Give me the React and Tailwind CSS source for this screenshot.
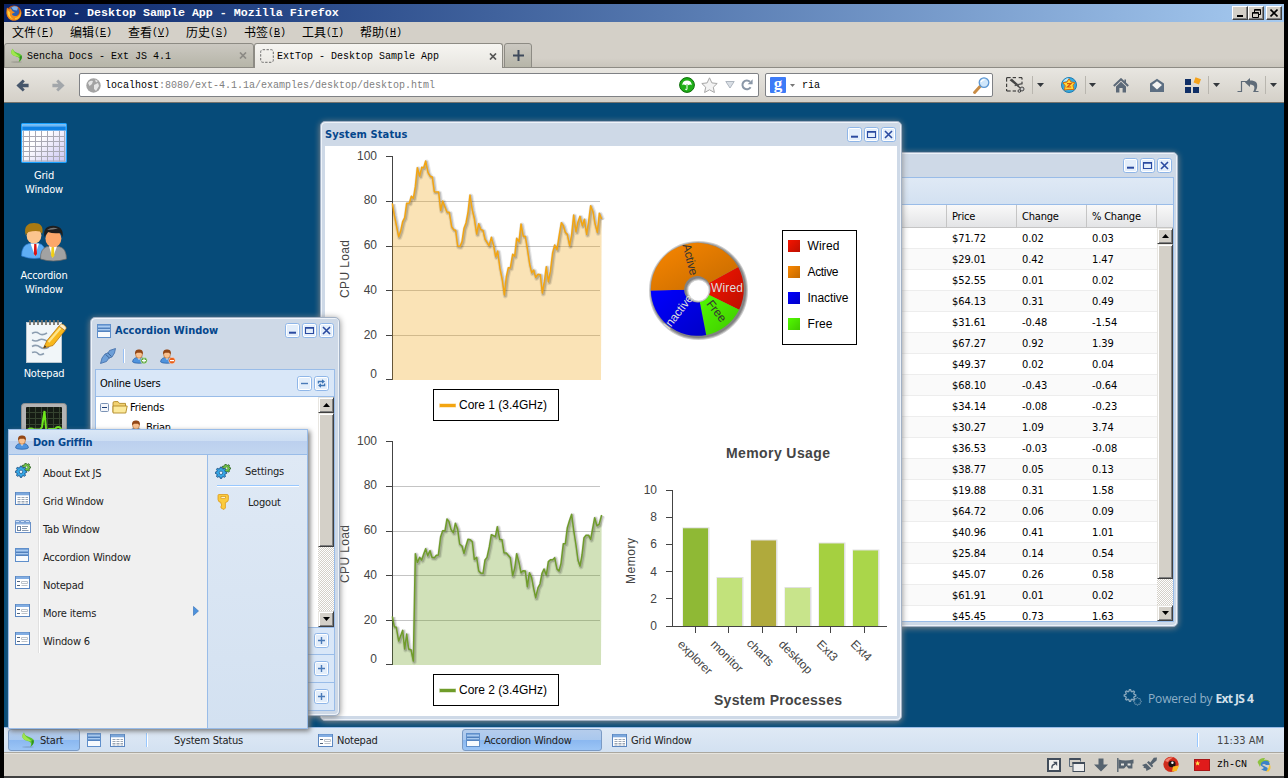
import React from "react";

/* ---------- small glyphs ---------- */
const Svg = ({ w, h, vb, className = "", children }) => (
  <svg width={w} height={h} viewBox={vb || `0 0 ${w} ${h}`} className={`shrink-0 ${className}`}>
    {children}
  </svg>
);

const Firefox = () => (
  <Svg w={16} h={16}>
    <circle cx="8" cy="8" r="7.6" fill="#c6500f" />
    <circle cx="8" cy="6.4" r="5.2" fill="#2f5fae" />
    <path d="M5.4 2.4Q9 0.2 12 2.6L11 5.5L7.5 5Z" fill="#7fb0ea" />
    <path d="M1 2.6C-0.4 8 1 15.6 8 15.6C14 15.6 16.4 10 14.6 4C14.6 8 12.6 11.4 9 11C6 10.7 5.6 9.2 6.4 8.4L9 7.6L6.4 6L4.8 3.2L3 4.4Z" fill="#f08a1c" />
    <path d="M1.6 5C1 10 3.4 13.4 7 14C4 12 3.4 9.4 4.2 7.4Z" fill="#ffce3a" />
    <path d="M9 14.4C13 14 15 11 14.8 7C13.6 11 12 12.6 9 13Z" fill="#fbc22c" />
  </Svg>
);

const Sencha = ({ w = 14, h = 16 }) => (
  <Svg w={w} h={h} vb="0 0 14 16">
    <ellipse cx="7" cy="15" rx="6" ry="0.8" fill="#000" opacity="0.15" />
    <path d="M3 0.6C0.6 3 0.8 7 4.4 8.2C7.6 9.3 10.4 9.6 10 12.4L9.4 15C13.4 12 14.4 8.2 10.4 6C7.4 4.6 3.8 4.2 3 0.6Z" fill="#5cc72d" />
    <path d="M3 0.6C0.6 3 0.8 7 4.4 8.2L10.4 9.6C9.6 6.8 3.8 6 3 0.6Z" fill="#a2e64e" />
    <path d="M10.4 9.6C11.4 11.4 10.8 13.4 9.4 15C12.4 13 13.6 10 12.2 7.6Z" fill="#2f8f24" />
  </Svg>
);

const Caret = ({ className = "" }) => (
  <Svg w={7} h={4} className={className}><path d="M0 0H7L3.5 4Z" fill="#33373c" /></Svg>
);

const Sep = ({ className = "" }) => <span className={`h-[18px] w-px shrink-0 bg-[#b9b6af] ${className}`} />;

const Arrow = ({ fill, flip }) => (
  <Svg w={13} h={13} className={flip ? "-scale-x-100" : ""}>
    <path d="M6.8 0.4L8.8 2.4L6.6 4.7H12.6V8.3H6.6L8.8 10.6L6.8 12.6L0.4 6.5Z" fill={fill} />
  </Svg>
);

const GridIcon = () => (
  <Svg w={15} h={13}>
    <rect x="0.5" y="0.5" width="14" height="12" fill="#fff" stroke="#5a86c0" />
    <rect x="1" y="0.5" width="13" height="2.8" fill="#7ba7dc" />
    {[5.5, 7.5, 9.5, 11].map((y) => (
      <path key={y} d={`M2.5 ${y}H5.5M6.5 ${y}H9.5M10.5 ${y}H13`} stroke="#9aa6b4" />
    ))}
  </Svg>
);

const AccIcon = () => (
  <Svg w={14} h={14}>
    <rect x="0.5" y="0.5" width="13" height="13" fill="#6f9bd3" stroke="#5f8fcb" />
    <path d="M1 2.5H13M1 5.5H13" stroke="#a9caf0" strokeWidth="1.4" />
    <path d="M1 4.5H13M1 7.3H13" stroke="#4676b4" strokeWidth="0.8" />
    <rect x="1" y="8" width="12" height="5" fill="#f7fafd" />
  </Svg>
);

const TabIcon = () => (
  <Svg w={16} h={13}>
    <path d="M0.5 3V0.5H4.5V3M5.5 3V0.5H9.5V3M10.5 3V0.5H14.5V3" fill="#cfe0f5" stroke="#7b9fd0" />
    <rect x="0.5" y="2.5" width="15" height="10" fill="#fff" stroke="#6a91c8" />
    <rect x="1" y="2.5" width="14" height="2" fill="#8db2e0" />
    <rect x="2.5" y="6.5" width="3" height="4" fill="none" stroke="#6d83a0" />
    <path d="M7 6.5H13M7 8.5H12M7 10.5H13.5" stroke="#8899ae" />
  </Svg>
);

const FormIcon = () => (
  <Svg w={15} h={13}>
    <rect x="0.5" y="0.5" width="14" height="12" fill="#fff" stroke="#5a86c0" />
    <rect x="1" y="0.5" width="13" height="2.5" fill="#82ade2" />
    <path d="M2 5.5H5M2 9.5H5" stroke="#53657c" />
    <path d="M6.5 5.5H12.5V7.5H6.5ZM6.5 9.5H12.5" fill="none" stroke="#bcc2c9" />
  </Svg>
);

const gearPath = (cx, cy, r, n) => {
  const pts = [];
  for (let i = 0; i < n * 4; i++) {
    const rad = i % 4 < 2 ? r : r * 0.74;
    const a = ((i - 0.5) * Math.PI * 2) / (n * 4);
    pts.push(`${(cx + rad * Math.cos(a)).toFixed(2)} ${(cy + rad * Math.sin(a)).toFixed(2)}`);
  }
  return `M${pts.join("L")}Z`;
};

const Gears = () => (
  <Svg w={16} h={15}>
    <path d={gearPath(11.4, 4.4, 4.3, 7)} fill="#74cb43" stroke="#2b5f24" strokeWidth="0.9" />
    <circle cx="11.6" cy="4.2" r="1.2" fill="#e4f6da" stroke="#2b5f24" strokeWidth="0.5" />
    <path d={gearPath(6, 8.8, 5.8, 8)} fill="#35a7e6" stroke="#1b4f83" strokeWidth="0.9" />
    <circle cx="6" cy="8.8" r="1.7" fill="#e8f4fc" stroke="#1b4f83" strokeWidth="0.7" />
  </Svg>
);

const Person = ({ badge, w = 15 }) => (
  <Svg w={w} h={15}>
    <path d="M0.7 13C0.7 9.8 3 8.4 7 8.4S13.3 9.8 13.3 13C12 14.6 2 14.6 0.7 13Z" fill="#4f93dd" stroke="#2b62a8" strokeWidth="0.8" />
    <path d="M5.2 8.6L7 11L8.8 8.6Z" fill="#fff" />
    <ellipse cx="7" cy="5.5" rx="3.4" ry="3.8" fill="#f9c08e" stroke="#a65f25" strokeWidth="0.6" />
    <path d="M3.2 5.5C2.4 1.6 4.6 0.4 7 0.4S11.6 1.6 10.8 5.5C10 4 9.4 3.6 7 3.7S4 4 3.2 5.5Z" fill="#934716" />
    {badge && (
      <g>
        <circle cx="12" cy="11.6" r="3.3" fill={badge === "add" ? "#5aa63c" : "#e8601c"} stroke="#fff" strokeWidth="0.5" />
        <path d={badge === "add" ? "M10 11.6H14M12 9.6V13.6" : "M10 11.6H14"} stroke="#fff" strokeWidth="1.2" />
      </g>
    )}
  </Svg>
);

const Key = () => (
  <Svg w={12} h={16}>
    <path d="M1 1.5Q1 0.5 2 0.5H10Q11.4 0.5 11.4 2V5.5Q11.4 8 8.4 8.5V14L7 15.5L4 14V12L5 11L4 10V8.5Q1 8 1 5.5Z" fill="#fbcb3e" stroke="#dd9a1b" strokeWidth="0.8" />
    <rect x="4" y="2.6" width="4.4" height="2" fill="#fff4c8" stroke="#d08e14" strokeWidth="0.6" />
  </Svg>
);

/* ---------- window chrome ---------- */
const Tool = ({ kind }) => (
  <Svg w={15} h={15}>
    <rect x="0.5" y="0.5" width="14" height="14" rx="2.2" fill="#e3eefb" stroke="#8fb6e8" />
    <rect x="1.5" y="1.5" width="12" height="12" rx="1.2" fill="none" stroke="#fff" />
    {kind === "min" && <path d="M4 9.7H11" stroke="#2a4aa0" strokeWidth="2" />}
    {kind === "max" && <path d="M3.5 4.5H11.5V10.5H3.5ZM3.5 5.3H11.5" fill="none" stroke="#2a4aa0" strokeWidth="1.1" />}
    {kind === "close" && <path d="M4 4L11 11M11 4L4 11" stroke="#2a4aa0" strokeWidth="1.6" />}
    {kind === "minus" && <path d="M4 7.5H11" stroke="#4a7ab8" strokeWidth="1.4" />}
    {kind === "plus" && <path d="M4 7.5H11M7.5 4V11" stroke="#4a7ab8" strokeWidth="1.4" />}
    {kind === "refresh" && (
      <g fill="none" stroke="#3f76b5" strokeWidth="1.3">
        <path d="M4.4 7.4V5.5H8.4M10.6 7.6V9.5H6.6" />
        <path d="M8 3.2L11 5.5L8 7.8ZM7 7.2L4 9.5L7 11.8Z" fill="#3f76b5" stroke="none" />
      </g>
    )}
  </Svg>
);

const WinTools = () => (
  <div className="flex gap-[2px]">
    <Tool kind="min" />
    <Tool kind="max" />
    <Tool kind="close" />
  </div>
);

const winFrame =
  "absolute flex flex-col rounded-[5px] border border-[#a2b1c5] bg-[#ced9e7] shadow-[inset_1px_1px_0_#eef3f9,inset_-1px_-1px_0_#eef3f9,0_1px_6px_#888]";

const SbButton = ({ down }) => (
  <div className="flex h-4 w-4 shrink-0 items-center justify-center border border-t-[#e8e6e1] border-l-[#e8e6e1] border-r-[#404040] border-b-[#404040] bg-[#d4d0c8] shadow-[inset_1px_1px_0_#fff,inset_-1px_-1px_0_#808080]">
    <Svg w={7} h={4}><path d={down ? "M0 0H7L3.5 4Z" : "M0 4H7L3.5 0Z"} fill="#000" /></Svg>
  </div>
);

const Scrollbar = ({ thumb }) => (
  <div className="flex w-4 shrink-0 flex-col bg-[#eae8e4] bg-[conic-gradient(#fff_25%,#d4d0c8_0_50%,#fff_0_75%,#d4d0c8_0)] bg-[length:2px_2px]">
    <SbButton />
    <div
      className={`${thumb} w-4 shrink-0 border border-t-[#e8e6e1] border-l-[#e8e6e1] border-r-[#404040] border-b-[#404040] bg-[#d4d0c8] shadow-[inset_1px_1px_0_#fff,inset_-1px_-1px_0_#808080]`}
    />
    <div className="flex-1" />
    <SbButton down />
  </div>
);

/* ---------- browser chrome ---------- */
const simsun = "font-['Liberation_Mono','Noto_Sans_CJK_SC',monospace]";

const CaptionBtn = ({ children, className = "" }) => (
  <div className={`flex h-[14px] w-4 items-center justify-center border border-t-white border-l-white border-r-[#404040] border-b-[#404040] bg-[#d4d0c8] shadow-[inset_-1px_-1px_0_#808080] ${className}`}>
    {children}
  </div>
);

const TitleBar = () => (
  <div className="flex h-[18px] shrink-0 items-center bg-linear-to-r from-[#0a246a] to-[#a6caf0] pr-[2px] pl-[2px]">
    <Firefox />
    <span className={`${simsun} ml-[2px] flex-1 pt-px text-[11.67px] font-bold whitespace-pre text-white`}>
      ExtTop - Desktop Sample App - Mozilla Firefox
    </span>
    <CaptionBtn><Svg w={9} h={8}><path d="M1 7H7" stroke="#000" strokeWidth="2" /></Svg></CaptionBtn>
    <CaptionBtn>
      <Svg w={9} h={9}>
        <path d="M2.5 3.5V0.5H8.5V5.5H6.5M2.5 1.2H8.5M0.5 3.5H6.5V8.5H0.5ZM0.5 4.2H6.5" fill="none" stroke="#000" />
      </Svg>
    </CaptionBtn>
    <CaptionBtn className="ml-[2px]"><Svg w={8} h={8}><path d="M0.5 0.5L7.5 7.5M7.5 0.5L0.5 7.5" stroke="#000" strokeWidth="1.6" /></Svg></CaptionBtn>
  </div>
);

const menus = [["文件", "F"], ["编辑", "E"], ["查看", "V"], ["历史", "S"], ["书签", "B"], ["工具", "T"], ["帮助", "H"]];

const MenuBar = () => (
  <div className="flex h-[21px] shrink-0 items-center bg-[#d4d0c8] pb-px pl-[8px] text-black">
    {menus.map(([t, k]) => (
      <span key={k} className="flex w-[58px] items-center whitespace-pre">
        <span className="font-['Noto_Sans_CJK_SC',sans-serif] text-[12px] leading-[20px]">{t}</span>
        <span className={`${simsun} text-[10px]`}>(<u>{k}</u>)</span>
      </span>
    ))}
  </div>
);

const TabBar = () => (
  <div className={`${simsun} flex h-[25px] shrink-0 bg-linear-to-b from-[#d4d0c8] from-60% to-[#c8c4bb] text-[10px] text-black shadow-[inset_0_-1px_0_#8d8b84]`}>
    <div className="flex w-[250px] items-center rounded-t-[3px] border border-b-[#8d8b84] border-[#8d8b84] bg-linear-to-b from-[#cbc8c1] to-[#b6b5a8] pr-[6px] pl-[5px]">
      <Sencha w={13} h={15} />
      <span className="ml-[4px] flex-1 pt-[2px] whitespace-pre">Sencha Docs - Ext JS 4.1</span>
      <Svg w={8} h={7}><path d="M1 0.5L7 6.5M7 0.5L1 6.5" stroke="#8c8a85" strokeWidth="1.7" /></Svg>
    </div>
    <div className="flex w-[249px] items-center rounded-t-[3px] border border-b-0 border-[#8d8b84] bg-linear-to-b from-[#f6f5f1] to-[#e8e6e1] pr-[5px] pl-[5px]">
      <Svg w={14} h={14}><rect x="0.7" y="0.7" width="12.6" height="12.6" rx="2" fill="none" stroke="#6c6c6c" strokeDasharray="2.4 1.4" /></Svg>
      <span className="ml-[3px] flex-1 pt-px whitespace-pre">ExtTop - Desktop Sample App</span>
      <Svg w={8} h={7}><path d="M1 0.5L7 6.5M7 0.5L1 6.5" stroke="#555" strokeWidth="1.7" /></Svg>
    </div>
    <div className="ml-px flex w-[28px] items-center justify-center rounded-t-[3px] border border-[#8d8b84] bg-linear-to-b from-[#cbc8c1] to-[#b6b5a8]">
      <Svg w={11} h={11}><path d="M0 5.5H11M5.5 0V11" stroke="#3e4a5c" strokeWidth="2" /></Svg>
    </div>
  </div>
);

const NavBar = () => (
  <div className="flex h-[35px] shrink-0 items-center border-b border-[#74726c] bg-linear-to-b from-[#e8e6e1] to-[#d4d0c8] pl-[12px]">
    <Arrow fill="#46566b" />
    <span className="ml-[23px] flex"><Arrow fill="#a2a6aa" flip /></span>
    <div className="ml-[14px] flex h-[24px] w-[680px] shrink-0 items-center rounded-[2px] border border-[#7f8185] bg-white pl-[6px]">
      <Svg w={15} h={15}>
        <circle cx="7.5" cy="7.5" r="7.2" fill="#a3a3a3" />
        <path d="M2 5Q4 2 7 3L6 6L3.6 8ZM8 7L12 5L13 8L10 13L8 11ZM9 1.5L12 3L10 4.4Z" fill="#e6e6e6" />
      </Svg>
      <span className={`${simsun} ml-[4px] flex-1 pt-px text-[10px] whitespace-pre text-[#808080]`}>
        <span className="text-black">localhost</span>:8080/ext-4.1.1a/examples/desktop/desktop.html
      </span>
      <Svg w={16} h={16}>
        <circle cx="8" cy="8" r="7.4" fill="#1faf18" stroke="#0d6d0a" />
        <path d="M3.2 8.2C3.4 5 5.4 3.6 8 3.6S12.6 5 12.8 8.2Q11.2 7 9.6 8.2Q8 7 6.4 8.2Q4.8 7 3.2 8.2Z" fill="#fff" />
        <path d="M8 8V12.4Q7 13.4 6.2 12" fill="none" stroke="#fff" />
      </Svg>
      <Svg w={17} h={16} className="ml-[6px]">
        <path d="M8.5 0.8L10.9 5.9L16.2 6.5L12.3 10.2L13.4 15.5L8.5 12.8L3.6 15.5L4.7 10.2L0.8 6.5L6.1 5.9Z" fill="#f3f3f3" stroke="#a5a5a5" />
      </Svg>
      <Svg w={10} h={8} className="ml-[7px]"><path d="M0.8 0.5H9.2L5 7Z" fill="#dadfe5" stroke="#aeb6bf" /></Svg>
      <Svg w={12} h={12} className="mr-[5px] ml-[6px]">
        <path d="M9.6 8.2A4.4 4.4 0 1 1 9 2.8" fill="none" stroke="#8a97a7" strokeWidth="2" />
        <path d="M6.6 5.2H11.6V0.2Z" fill="#8a97a7" />
      </Svg>
    </div>
    <div className="ml-[6px] flex h-[24px] w-[228px] shrink-0 items-center rounded-[2px] border border-[#7f8185] bg-white pl-[4px]">
      <span className="flex h-4 w-4 items-center justify-center rounded-[1px] bg-[#3d7bf7] pb-[3px] font-['Liberation_Serif',serif] text-[17px] leading-none font-bold text-white">g</span>
      <Svg w={5} h={3} className="ml-[4px]"><path d="M0 0H5L2.5 3Z" fill="#777" /></Svg>
      <span className={`${simsun} ml-[7px] flex-1 pt-px text-[10px] text-black`}>ria</span>
      <Svg w={17} h={17} className="mr-[2px]">
        <path d="M1.6 15.4L7 9.6" stroke="#c98c45" strokeWidth="3" strokeLinecap="round" />
        <circle cx="11" cy="5.6" r="4.8" fill="#cfe6fa" stroke="#5d97d2" strokeWidth="1.3" />
        <path d="M8 5Q9 2.6 11.6 2.6" fill="none" stroke="#fff" strokeWidth="1.4" />
      </Svg>
    </div>
    <Svg w={19} h={16} vb="0 0 57 48" className="ml-[13px]">
      <path d="M2 14V2H14M20 2H30M38 2H48V8M2 20V30M2 36V42H14M20 42H30M48 14V22" fill="none" stroke="#222" strokeWidth="3" />
      <path d="M12 8L44 34M16 6L38 26" stroke="#444" strokeWidth="4" />
      <path d="M48 20L26 26" stroke="#555" strokeWidth="4" />
      <circle cx="48" cy="36" r="6" fill="#ccc" stroke="#444" strokeWidth="3" />
      <circle cx="40" cy="42" r="4" fill="#ccc" stroke="#444" strokeWidth="3" />
    </Svg>
    <Sep className="ml-[7px]" />
    <Caret className="ml-[4px]" />
    <Svg w={16} h={16} className="ml-[17px]">
      <circle cx="8" cy="8" r="7.5" fill="#3aa9dd" stroke="#1c7db4" />
      <path d="M2 5Q4 1 8 1L6 4Z" fill="#b8e8fa" />
      <path d="M8 1.8L10 5L13.8 5.6L12 8.6L13 12.6L8 12.4L3.4 13L4.2 8.8L2 5.8L6 5Z" fill="#ffd93b" stroke="#d8700e" />
      <path d="M6 6.6H10L6.4 10H10.2" fill="none" stroke="#d8520e" strokeWidth="1.2" />
    </Svg>
    <Sep className="ml-[8px]" />
    <Caret className="ml-[3px]" />
    <Svg w={16} h={15} className="ml-[17px]">
      <path d="M0.8 8L8 1.2L15.2 8" fill="none" stroke="#5c6978" strokeWidth="2" />
      <path d="M3 8.4L8 3.8L13 8.4V14.5H9.6V10H6.4V14.5H3ZM11.4 1.6H13V5H11.4Z" fill="#5c6978" />
    </Svg>
    <Svg w={16} h={15} className="ml-[20px]">
      <path d="M1 5.5L8 0.8L15 5.5V14H1Z" fill="#5c6e82" />
      <path d="M3 7L8 3.2L13 7L8 11.4Z" fill="#f4f4f2" />
    </Svg>
    <Svg w={16} h={16} className="ml-[20px]">
      <path d="M0 2H6V8H0ZM0 10H6V16H0ZM8 10H14V16H8Z" fill="#102f66" />
      <path d="M10.5 0.2L16 2.2L14 7.6L8.6 5.6Z" fill="#f5a21a" />
    </Svg>
    <Sep className="ml-[7px]" />
    <Caret className="ml-[4px]" />
    <Svg w={22} h={16} className="ml-[17px]">
      <path d="M0.5 14.5H4.5V4.5H10" fill="none" stroke="#5f6b78" strokeWidth="1.2" />
      <path d="M8 5.5L13 1V3.6C19 3.6 21 6 20 11L18.6 14H21.5V15H16C18.4 11 18 7.4 13 7.4V10Z" fill="#5f6b78" />
    </Svg>
    <Sep className="ml-[6px]" />
    <Caret className="ml-[4px]" />
  </div>
);

/* ---------- desktop shortcuts ---------- */
const shortcuts = [
  {
    top: "top-[20px]",
    gap: "mt-[6px]",
    label: ["Grid", "Window"],
    icon: (
      <Svg w={46} h={40}>
        <defs>
          <linearGradient id="gridFill" x1="0" y1="0" x2="1" y2="1"><stop offset="0.4" stopColor="#fff" /><stop offset="1" stopColor="#c8c2f2" /></linearGradient>
        </defs>
        <rect x="0.6" y="0.6" width="44.8" height="38.8" rx="1.2" fill="url(#gridFill)" stroke="#16a0ff" strokeWidth="1.2" />
        <rect x="1.2" y="1.2" width="43.6" height="2.4" fill="#6db7f2" />
        <rect x="1.2" y="3.4" width="43.6" height="4.2" fill="#0f82e4" />
        <path d="M2.5 8V38.5M8.5 8V38.5M14.5 8V38.5M20.5 8V38.5M26.5 8V38.5M32.5 8V38.5M38.5 8V38.5M43.5 8V38.5M1.5 13.5H44M1.5 18.5H44M1.5 23.5H44M1.5 28.5H44M1.5 33.5H44M1.5 38H44" stroke="#a9a9b4" strokeWidth="1" />
      </Svg>
    ),
  },
  {
    top: "top-[119px]",
    gap: "mt-[7px]",
    label: ["Accordion", "Window"],
    icon: (
      <Svg w={46} h={40}>
        <path d="M0.5 34Q0.5 23 8 21.6H18Q24 22 25 34Q14 39 0.5 34Z" fill="#5eaef5" stroke="#2b79cc" strokeWidth="0.7" />
        <path d="M9.5 21.5L14 34L18 21.5Z" fill="#fff" />
        <path d="M13.2 22H15.4L16 32L14.3 34L12.8 32Z" fill="#d91414" />
        <ellipse cx="13" cy="13.5" rx="7.4" ry="8" fill="#fbc58e" />
        <path d="M4.6 13C2.6 4 7 1 13 1S23 4 21.2 12L19 9.5Q14 8.5 7.5 10Z" fill="#a87a12" />
        <path d="M19.5 37Q19 27 26 24.6H38Q45.5 26 45.5 37Q32 41 19.5 37Z" fill="#a2a2a2" stroke="#666" strokeWidth="0.7" />
        <path d="M28 24.3L31.6 36L36 24.3Z" fill="#fff" />
        <path d="M30.6 25H33L33.4 33.5L31.6 36L30 33.5Z" fill="#efcf18" />
        <ellipse cx="32.4" cy="16.6" rx="8" ry="8.6" fill="#fca76a" />
        <path d="M23.4 15C22 7 26 3.8 32 3.8S43 7 41.5 15L39.6 11Q32 12 27 10Z" fill="#1e1e1e" />
        <path d="M26 8Q31 4.4 37 6.6Q32 8 26 8Z" fill="#777" />
      </Svg>
    ),
  },
  {
    top: "top-[216px]",
    gap: "mt-[4px]",
    label: ["Notepad"],
    icon: (
      <Svg w={46} h={44}>
        <rect x="5.5" y="3.5" width="35" height="40" fill="#f1f6f9" stroke="#bac7d0" />
        <path d="M9 1V6M13 1V6M17 1V6M21 1V6M25 1V6M29 1V6M33 1V6M37 1V6" stroke="#77736b" strokeWidth="1.8" />
        <path d="M11 14.5Q15 12 18 14.5T26 14M11 21Q15 23 18 21T26 22M11 27.5Q15 25 19 28T28 28M11 33.5Q15 32 17 34.5T23 34.5" fill="none" stroke="#8b9db0" strokeWidth="1.6" />
        <path d="M22.5 29L26 21.5L38 7L44 11.5L32 26.5Z" fill="#f8b81d" stroke="#b9750b" strokeWidth="0.8" />
        <path d="M27.5 23L39.5 9" stroke="#fde58c" strokeWidth="2.2" />
        <path d="M38 7L40.4 5Q43.5 5 45.4 9L44 11.5Z" fill="#fdeec8" stroke="#b9750b" strokeWidth="0.6" />
        <path d="M22.5 29L23.8 26.2L25.4 28Z" fill="#333" />
      </Svg>
    ),
  },
  {
    top: "top-[300px]",
    gap: "mt-[6px]",
    label: [],
    icon: (
      <Svg w={46} h={46}>
        <rect x="0.5" y="0.5" width="45" height="45" rx="3" fill="#b4b4b4" stroke="#8e8e8e" />
        <rect x="5" y="4" width="36" height="38" rx="1" fill="#161c14" />
        <path d="M8.5 4V42M14.5 4V42M20.5 4V42M26.5 4V42M32.5 4V42M38.5 4V42M5 9.5H41M5 15.5H41M5 21.5H41" stroke="#35432f" />
        <path d="M7 26.5Q10 24.5 13 26.5H19L21 24L23.5 8L25.6 32L28 26H34Q36 23 39 24.5L41 27" fill="none" stroke="#6ee61c" strokeWidth="2" />
      </Svg>
    ),
  },
];

const Shortcut = ({ top, gap, label, icon }) => (
  <div className={`absolute left-[6px] ${top} flex w-[67px] flex-col items-center pl-px text-center text-white`}>
    {icon}
    <div className={`${gap} leading-[14px]`}>
      {label.map((l) => <div key={l}>{l}</div>)}
    </div>
  </div>
);

/* ---------- grid window ---------- */
const quotes = [
  ["$71.72", "0.02", "0.03"], ["$29.01", "0.42", "1.47"], ["$52.55", "0.01", "0.02"], ["$64.13", "0.31", "0.49"],
  ["$31.61", "-0.48", "-1.54"], ["$67.27", "0.92", "1.39"], ["$49.37", "0.02", "0.04"], ["$68.10", "-0.43", "-0.64"],
  ["$34.14", "-0.08", "-0.23"], ["$30.27", "1.09", "3.74"], ["$36.53", "-0.03", "-0.08"], ["$38.77", "0.05", "0.13"],
  ["$19.88", "0.31", "1.58"], ["$64.72", "0.06", "0.09"], ["$40.96", "0.41", "1.01"], ["$25.84", "0.14", "0.54"],
  ["$45.07", "0.26", "0.58"], ["$61.91", "0.01", "0.02"], ["$45.45", "0.73", "1.63"],
];

const GridWindow = () => (
  <div className={`${winFrame} top-[49px] left-[433px] h-[475px] w-[741px] p-[4px] pt-0 pr-[3px]`}>
    <div className="flex h-[24px] shrink-0 items-center justify-end pr-[2px]"><WinTools /></div>
    <div className="flex min-h-0 flex-1 flex-col border border-[#99bce8]">
      <div className="h-[27px] shrink-0 border-b border-[#99bce8] bg-linear-to-b from-[#dfe9f5] to-[#d3e1f1]" />
      <div className="flex h-[23px] shrink-0 items-center justify-end border-b border-[#c5c5c5] bg-linear-to-b from-[#f9f9f9] to-[#e3e4e6] text-black">
        {["Price", "Change", "% Change"].map((h) => (
          <span key={h} className="flex h-full w-[70px] items-center border-l border-[#c5c5c5] pl-[5px]">{h}</span>
        ))}
        <span className="h-full w-[17px] border-l border-[#c5c5c5]" />
      </div>
      <div className="flex min-h-0 flex-1 bg-white">
        <div className="flex-1 overflow-hidden text-black">
          {quotes.map((r, i) => (
            <div key={i} className={`flex h-[21px] items-center justify-end border-b border-[#ededed] ${i % 2 ? "bg-[#fafafa]" : "bg-white"}`}>
              {r.map((c, j) => <span key={j} className="w-[70px] pl-[5px] tracking-[-0.1px]">{c}</span>)}
            </div>
          ))}
        </div>
        <Scrollbar thumb="h-[335px]" />
      </div>
    </div>
  </div>
);

/* ---------- system status window ---------- */
const core1 =
  "232,265 238,300 251,365 257,348 263,320 269,308 275,265 283,264 289,244 295,250 301,215 307,158 314,183 320,157 326,158 332,138 339,172 346,184 352,186 358,230 371,231 377,286 383,258 396,291 403,292 410,335 416,344 422,346 428,393 435,394 441,380 447,340 453,324 459,292 465,240 472,285 478,310 485,357 491,326 497,343 504,346 510,372 522,392 529,367 536,392 542,425 548,408 555,460 562,495 568,540 574,485 580,458 586,459 593,418 599,424 605,370 612,380 618,327 625,364 631,364 637,400 644,447 650,473 656,465 662,487 669,478 676,479 682,534 688,500 694,455 700,500 706,470 713,413 719,390 726,404 732,365 739,323 745,332 751,352 757,358 764,392 770,358 776,300 783,350 789,320 795,304 802,332 808,313 815,358 821,318 827,272 834,290 840,325 847,352 853,295 860,312";
const core2 =
  "232,574 238,605 244,607 251,648 257,632 263,616 269,672 275,627 281,672 288,674 295,708 301,386 307,412 314,397 320,405 326,387 332,371 338,392 345,377 351,397 358,398 364,391 370,390 377,335 383,317 390,317 396,282 402,290 408,313 415,323 421,295 428,312 434,357 441,363 447,385 453,362 459,343 466,344 472,350 478,403 485,397 491,437 497,444 504,445 510,405 516,397 523,365 529,329 541,335 547,305 554,343 561,344 567,383 574,384 586,398 593,452 599,430 605,386 612,412 618,443 624,437 631,438 637,485 643,443 650,458 656,490 662,518 669,488 675,477 681,445 687,432 694,450 700,410 707,404 713,404 719,398 726,432 732,438 738,415 745,356 751,356 757,308 764,285 770,268 776,315 783,360 789,405 795,423 801,390 807,338 813,331 821,331 827,343 833,310 839,278 846,302 852,298 860,270";

const CpuChart = ({ y, pts, oy, base, color, fill, name, labelX }) => (
  <g>
    {[20, 40, 60, 80].map((v) => (
      <path key={v} d={`M393 ${Math.round(y + 224 - v * 2.24) + 0.5}H600`} stroke="#c4c4c4" />
    ))}
    {[0, 20, 40, 60, 80, 100].map((v) => (
      <path key={v} d={`M386 ${Math.round(y + 224 - v * 2.24) + (v ? 0.5 : -0.5)}H393`} stroke="#444" />
    ))}
    <path d={`M392.5 ${y}V${y + 224}`} stroke="#444" />
    <g fontSize="12" fill="#444" textAnchor="end">
      {[20, 40, 60, 80, 100].map((v) => (
        <text key={v} x="377" y={y + 227.5 - v * 2.24}>{v}</text>
      ))}
      <text x="377" y={y + 221.5}>0</text>
    </g>
    <text fontSize="12" fill="#444" textLength="58" transform={`translate(${labelX} ${y + 142}) rotate(-90)`}>CPU Load</text>
    <g transform={`translate(315 ${oy}) scale(0.33333)`}>
      <polygon points={`232,${base} ${pts} 858,${base}`} fill={fill} fillOpacity="0.3" />
      <polyline points={pts} fill="none" stroke="#000" strokeOpacity="0.09" strokeWidth="15" transform="translate(3 3)" strokeLinejoin="round" />
      <polyline points={pts} fill="none" stroke="#000" strokeOpacity="0.16" strokeWidth="8" transform="translate(3 3)" strokeLinejoin="round" />
      <polyline points={pts} fill="none" stroke={color} strokeWidth="4.5" strokeLinejoin="round" />
    </g>
    <rect x="433.5" y={y + 233.5} width="125" height="31" fill="#fff" stroke="#000" />
    <path d={`M439 ${y + 249.5}H456`} stroke={color} strokeWidth="4" strokeOpacity="0.45" />
    <path d={`M440 ${y + 249.5}H455.5`} stroke={color} strokeWidth="3" />
    <text x="459" y={y + 253} fontSize="12" fill="#000" textLength="88">{name}</text>
  </g>
);

const CX = 697.3, CY = 289.3, RO = 46.5, RI = 13.2;
const slice = (a, b) => {
  const p = (r, t) => `${CX + r * Math.cos((t * Math.PI) / 180)} ${CY + r * Math.sin((t * Math.PI) / 180)}`;
  const big = b - a > 180 ? 1 : 0;
  return `M${p(RO, a)}A${RO} ${RO} 0 ${big} 1 ${p(RO, b)}L${p(RI, b)}A${RI} ${RI} 0 ${big} 0 ${p(RI, a)}Z`;
};

const bars = [
  ["explorer", 683, 528.3, "#8fb935", 695.5, 677, 645],
  ["monitor", 717, 578, "#c2e27b", 728.5, 710, 645],
  ["charts", 751, 540.5, "#b0aa3c", 762.5, 746, 644],
  ["desktop", 785, 588, "#c8e48b", 796.5, 778, 645],
  ["Ext3", 819, 543.5, "#a5d040", 830.5, 816, 645],
  ["Ext4", 853, 550.5, "#aad64a", 864.5, 850, 645],
];

const StatusWindow = () => (
  <div className={`${winFrame} top-[18px] left-[316px] h-[600px] w-[582px] px-[4px] pb-[4px]`}>
    <div className="flex h-[24px] shrink-0 items-center justify-between pr-px">
      <span className="text-[11px] font-bold tracking-[0.12px] text-[#04468c]">System Status</span>
      <WinTools />
    </div>
    <svg width="572" height="570" viewBox="325 146 572 570" className="shrink-0 bg-white font-['Liberation_Sans',Arial,sans-serif] tracking-normal">
      <defs>
        <linearGradient id="wired" x1="0" y1="0" x2="1" y2="1"><stop offset="0" stopColor="#f51400" /><stop offset="1" stopColor="#bd0f00" /></linearGradient>
        <linearGradient id="active" x1="0" y1="0" x2="1" y2="1"><stop offset="0" stopColor="#fa8700" /><stop offset="1" stopColor="#c46a00" /></linearGradient>
        <linearGradient id="inactive" x1="0" y1="0" x2="1" y2="1"><stop offset="0" stopColor="#0000ff" /><stop offset="1" stopColor="#0000c8" /></linearGradient>
        <linearGradient id="free" x1="0" y1="0" x2="1" y2="1"><stop offset="0" stopColor="#52fa00" /><stop offset="1" stopColor="#3fc800" /></linearGradient>
      </defs>
      <CpuChart y={156} pts={core1} oy={115} base={795} color="#f3a511" fill="#eea20e" name="Core 1 (3.4GHz)" labelX={349} />
      <CpuChart y={441} pts={core2} oy={425} base={720} color="#6f9c2a" fill="#689a17" name="Core 2 (3.4GHz)" labelX={349} />

      {[6, 4, 2].map((w) => (
        <circle key={w} cx={CX + 1.2} cy={CY + 1.2} r={(RO + RI) / 2} fill="none" stroke="#000" strokeOpacity="0.2" strokeWidth={RO - RI + w} />
      ))}
      <path d={slice(-28.5, 26)} fill="url(#wired)" />
      <path d={slice(26, 79)} fill="url(#free)" />
      <path d={slice(79, 178.5)} fill="url(#inactive)" />
      <path d={slice(178.5, 331.5)} fill="url(#active)" />
      <g fontSize="12">
        <text x="711" y="292" fill="#ddd" textLength="32">Wired</text>
        <text fill="#333" textLength="32" transform="translate(682.5 245) rotate(76)">Active</text>
        <text fill="#333" textLength="24" transform="translate(706 304) rotate(52)">Free</text>
        <text fill="#ddd" textLength="40" transform="translate(669 330) rotate(-52)">Inactive</text>
      </g>

      <rect x="782.5" y="230.5" width="74" height="114" fill="#fff" stroke="#000" />
      {[["Wired", "wired", 240, 32], ["Active", "active", 266, 31], ["Inactive", "inactive", 292, 41], ["Free", "free", 318, 25]].map(([t, g, y, l]) => (
        <g key={t}>
          <rect x="788" y={y} width="12" height="12" fill={`url(#${g})`} />
          <text x="807.5" y={y + 10} fontSize="12" textLength={l} fill="#000">{t}</text>
        </g>
      ))}
      <text x="726" y="458" fontSize="14" fontWeight="bold" fill="#444" textLength="104">Memory Usage</text>

      <g stroke="#444">
        <path d="M672.5 490V627" />
        {[490.5, 517.5, 544.5, 571.5, 598.5, 626.5].map((y) => <path key={y} d={`M666 ${y}H673`} />)}
      </g>
      <g fontSize="12" fill="#444" textAnchor="end">
        {[[10, 494], [8, 521], [6, 548], [4, 575.5], [2, 602.5], [0, 630]].map(([t, y]) => <text key={t} x="657" y={y}>{t}</text>)}
      </g>
      <text fontSize="12" fill="#444" textLength="46" transform="translate(635 584) rotate(-90)">Memory</text>
      {bars.map(([t, x, y, c, tx, lx, ly]) => (
        <g key={t}>
          <rect x={x - 0.5} y={y - 1} width="27" height={627 - y} fill="#000" opacity="0.12" />
          <rect x={x} y={y} width="25" height={626 - y} fill={c} />
          <path d={`M${tx} 627V633`} stroke="#444" />
          <text fontSize="12" fill="#444" transform={`translate(${lx} ${ly}) rotate(45)`}>{t}</text>
        </g>
      ))}
      <path d="M666 626.5H887" stroke="#444" />
      <text x="714" y="705" fontSize="14" fontWeight="bold" fill="#444" textLength="128">System Processes</text>
    </svg>
  </div>
);

/* ---------- accordion window ---------- */
const AccordionWindow = () => (
  <div className={`${winFrame} top-[214px] left-[86px] h-[399px] w-[250px] p-[4px] pt-0`}>
    <div className="flex h-[25px] shrink-0 items-center pl-[2px]">
      <AccIcon />
      <span className="ml-[4px] flex-1 text-[11px] font-bold tracking-normal text-[#04468c]">Accordion Window</span>
      <span className="pr-px"><WinTools /></span>
    </div>
    <div className="flex h-[26px] shrink-0 items-center pl-[5px]">
      <Svg w={16} h={16}>
        <path d="M0.5 15.5L2 10L5 6L8 5L9.5 2.5L15.5 0.5L14.5 5L12 9L9 10L6.5 13.5Z" fill="#6d9fd8" stroke="#3f6ca8" strokeWidth="0.8" />
        <path d="M5.6 6.4L9.6 10.2M7.6 4.8L11.4 8.4" stroke="#3d6597" />
      </Svg>
      <span className="ml-[7px] h-[14px] w-[2px] border-r border-white bg-[#98c0f4]" />
      <span className="ml-[7px] flex"><Person badge="add" w={16} /></span>
      <span className="ml-[12px] flex"><Person badge="del" w={16} /></span>
    </div>
    <div className="flex min-h-0 flex-1 flex-col border border-[#99bce8] bg-[#d9e7f8]">
      <div className="flex h-[27px] shrink-0 items-center border-b border-[#99bce8] pr-[5px] pl-[4px] text-black">
        <span className="flex-1">Online Users</span>
        <div className="flex gap-[2px]"><Tool kind="minus" /><Tool kind="refresh" /></div>
      </div>
      <div className="flex h-[230px] shrink-0 bg-white text-black">
        <div className="flex-1 pl-[4px]">
          <div className="flex h-[20px] items-center">
            <Svg w={9} h={9}><rect x="0.5" y="0.5" width="8" height="8" rx="1" fill="#f4f6fa" stroke="#7b93b5" /><path d="M2 4.5H7" stroke="#1d3f75" /></Svg>
            <Svg w={16} h={13} className="ml-[3px]">
              <path d="M1 11V2Q1 0.6 2.4 0.6H6L7.4 2.4H13.5V5" fill="#f2d272" stroke="#b08926" strokeWidth="0.9" />
              <path d="M1 12V5H15.2L13.8 12Z" fill="#fbe99b" stroke="#b08926" strokeWidth="0.9" />
            </Svg>
            <span className="ml-[2px]">Friends</span>
          </div>
          <div className="flex h-[20px] items-center pl-[29px]">
            <Person />
            <span className="ml-[2px]">Brian</span>
          </div>
        </div>
        <Scrollbar thumb="h-[134px]" />
      </div>
      {["h-[27px] border-t pb-px", "h-[28px] border-t", "h-[29px] border-t pb-[2px]"].map((c, i) => (
        <div key={i} className={`flex shrink-0 items-center justify-end border-[#99bce8] pr-[5px] ${c}`}><Tool kind="plus" /></div>
      ))}
    </div>
  </div>
);

/* ---------- start menu ---------- */
const menuItems = [
  [<Gears />, "About Ext JS"], [<GridIcon />, "Grid Window"], [<TabIcon />, "Tab Window"], [<AccIcon />, "Accordion Window"],
  [<FormIcon />, "Notepad"], [<FormIcon />, "More items", true], [<FormIcon />, "Window 6"],
];

const StartMenu = () => (
  <div className="absolute top-[326px] left-[4px] flex h-[300px] w-[300px] flex-col border border-[#99bce8] bg-[#dae6f4] shadow-[2px_2px_5px_#777]">
    <div className="flex h-[25px] shrink-0 items-center border-b border-[#99bce8] bg-[linear-gradient(#dae7f6,#cddef3_45%,#bcd0ee_46%,#c2d6f0)] pl-[6px]">
      <Person />
      <span className="ml-[3px] text-[11px] font-bold tracking-[-0.15px] text-[#04468c]">Don Griffin</span>
    </div>
    <div className="flex min-h-0 flex-1 text-[#222]">
      <div className="w-[199px] border-r border-[#99bce8] bg-[#f0f0f0] pt-[2px]">
        <div className="flex h-[199px] flex-col">
          {menuItems.map(([icon, t, more]) => (
            <div key={t} className="flex h-[28px] shrink-0 items-center">
              <span className="flex h-full w-[30px] items-center border-r border-[#e0e0e0] pb-[1px] pl-[6px] shadow-[1px_0_0_#fff]">{icon}</span>
              <span className="flex-1 pt-[5px] pl-[4px]">{t}</span>
              {more && <Svg w={6} h={10} className="mr-[8px] mb-px"><path d="M0.5 0.5L5.5 5L0.5 9.5Z" fill="#4d92dc" stroke="#2c6cb8" strokeWidth="0.6" /></Svg>}
            </div>
          ))}
        </div>
      </div>
      <div className="flex-1 bg-linear-to-b from-[#dfe9f5] to-[#d3e1f1] pt-[7px]">
        <div className="flex h-[18px] items-center pl-[7px]">
          <Gears />
          <span className="ml-[14px]">Settings</span>
        </div>
        <div className="mx-[9px] mt-[5px] mr-[8px] h-[2px] border-b border-white bg-[#98c8ff]" />
        <div className="mt-[5px] flex h-[20px] items-center pl-[9px]">
          <Key />
          <span className="ml-[19px]">Logout</span>
        </div>
      </div>
    </div>
  </div>
);

/* ---------- task bar ---------- */
const Divider = ({ className = "" }) => <span className={`h-[14px] w-[2px] shrink-0 border-r border-white bg-[#98c8ff] ${className}`} />;

const TaskBar = () => (
  <div className="absolute top-[624px] left-0 flex h-[25px] w-full items-center border-t border-[#99bce8] bg-linear-to-b from-[#dfe9f5] to-[#d3e1f1] pl-[4px] text-[#222]">
    <div className="flex h-[22px] w-[72px] items-center rounded-[3px] border border-[#7a9ac4] bg-[linear-gradient(#b5cdec,#a9c8ee_50%,#8bb8f0_52%,#9cc5f5)] pl-[12px]">
      <Sencha w={14} h={16} />
      <span className="ml-[5px] pt-px">Start</span>
    </div>
    <span className="ml-[7px] flex"><AccIcon /></span>
    <span className="ml-[9px] flex"><GridIcon /></span>
    <Divider className="ml-[21px]" />
    <span className="ml-[26px] w-[144px] pt-px">System Status</span>
    <FormIcon />
    <span className="ml-[4px] w-[125px] pt-px">Notepad</span>
    <div className="flex h-[22px] w-[140px] items-center rounded-[3px] border border-[#7a9ac4] bg-[linear-gradient(#b5cdec,#a9c8ee_50%,#8bb8f0_52%,#9cc5f5)] pl-[3px]">
      <AccIcon />
      <span className="ml-[4px] pt-px">Accordion Window</span>
    </div>
    <span className="ml-[10px] flex"><GridIcon /></span>
    <span className="ml-[4px] flex-1 pt-px">Grid Window</span>
    <Divider />
    <span className="mr-[20px] ml-[18px] pt-px tracking-normal text-[#444]">11:33 AM</span>
  </div>
);

const PoweredBy = () => (
  <div className="absolute top-[586px] left-[1119px] flex items-center font-['Open_Sans',sans-serif] text-[12px] whitespace-pre text-[#8fb0c8]">
    <Svg w={19} h={18}>
      <g fill="none" stroke="#8aa9be">
        <path d={gearPath(7, 6.5, 5.8, 8)} strokeWidth="1.3" />
        <path d={gearPath(14.5, 12.4, 3.9, 8)} strokeWidth="0.9" opacity="0.7" />
      </g>
    </Svg>
    <span className="ml-[6px] tracking-[-0.15px]">Powered by <b className="font-bold tracking-[-0.6px] text-[#d3e0ea]">Ext JS 4</b></span>
  </div>
);

/* ---------- status bar ---------- */
const StatusBar = () => (
  <div className="flex h-[24px] shrink-0 items-center justify-end border-t border-[#aaa79f] bg-[#d4d0c8] pr-[12px] shadow-[inset_0_1px_0_#e6e4de]">
    <Svg w={14} h={14}>
      <rect x="1" y="1" width="12" height="12" fill="#f1f1ef" stroke="#414c5a" strokeWidth="2" />
      <path d="M5 10.4Q4.4 7 8 6" fill="none" stroke="#414c5a" strokeWidth="1.3" />
      <path d="M6 3.8H10.2V8Z" fill="#414c5a" />
    </Svg>
    <Svg w={16} h={14} className="ml-[8px]">
      <path d="M3.5 8.5H0.5V0.5H11.5V3.5" fill="none" stroke="#5b6b7c" />
      <rect x="4" y="4.5" width="11.5" height="9" fill="#eee" stroke="#414c5a" />
      <path d="M3.5 5H16M0.5 1H11.5" stroke="#414c5a" strokeWidth="2" />
    </Svg>
    <Svg w={14} h={14} className="ml-[9px]"><path d="M4.5 0.5H9.5V6.5H14L7 13.5L0 6.5H4.5Z" fill="#56636f" /></Svg>
    <Svg w={17} h={14} className="ml-[9px]">
      <path d="M0.8 0V14" stroke="#56636f" strokeWidth="1.4" />
      <path d="M1.5 1.5Q8 3.6 16.5 1.5V5.6H15.4V10.4H11.5L9.4 8L7 10.4H1.5Z" fill="#56636f" />
      <path d="M4 5.4H7V7.6H4ZM10.6 5.4H13.6V7.6H10.6Z" fill="#e8e8e4" />
    </Svg>
    <Svg w={15} h={15} className="ml-[8px]"><path d="M15 0.5L11.8 0.8L8.4 5.4L6.6 4L5 5.6L10 10.6L11.2 9L10 7.4L14.6 3.6ZM4.2 6.4L0 8L2 9.4L1.4 10.8L4 11.4L4.4 14L9.2 11.4Z" fill="#56636f" /></Svg>
    <Svg w={16} h={17} className="ml-[6px]">
      <circle cx="8" cy="8.4" r="7.6" fill="#cf2c1c" />
      <path d="M2 5Q5 1 10 1.4Q6 3.6 5 6Z" fill="#ef8271" />
      <ellipse cx="9" cy="8" rx="3.6" ry="3.2" fill="#1d1212" />
      <circle cx="9.4" cy="6.8" r="1.2" fill="#fff" />
      <path d="M10 10.4L16 9.6L13.6 15L9 15.4Z" fill="#fbb81e" />
    </Svg>
    <Svg w={16} h={12} className="ml-[15px]">
      <rect x="0.5" y="0.5" width="15" height="11" fill="#e01b1b" stroke="#a71616" />
      <path d="M3.6 1.8L4.4 3.6H6L4.8 4.8L5.2 6.6L3.6 5.6L2 6.6L2.4 4.8L1.2 3.6H2.8Z" fill="#ffe04a" />
    </Svg>
    <span className={`${simsun} ml-[7px] text-[10px] text-black`}>zh-CN</span>
    <Svg w={15} h={15} className="ml-[10px]">
      <path d="M0.5 5Q3 0.5 8 1L7 3Q11 2 13 5Q9 4 6 6Q3 7.6 3 10Z" fill="#8dc23e" />
      <path d="M5 5Q9 2.6 12 5L13 8L9 8Q7 6 5 8L9 10Q12 11 10 14Q7 14.6 4 12Q8 12 6 10Q2 8 5 5Z" fill="#3c82c8" />
      <path d="M12.6 7Q15 11 11.6 14.6H8.6Q12 12 12.6 7Z" fill="#f5c435" />
    </Svg>
  </div>
);

export default function App() {
  return (
    <div className="flex h-[778px] w-[1288px] flex-col overflow-hidden bg-black px-[4px] pt-[4px] font-['DejaVu_Sans_Condensed','DejaVu_Sans',sans-serif] text-[11px] leading-[13px]">
      <TitleBar />
      <MenuBar />
      <TabBar />
      <NavBar />
      <div className="relative h-[649px] shrink-0 overflow-hidden bg-[#064b79] tracking-[-0.2px]">
        {shortcuts.map((s) => <Shortcut key={s.top} {...s} />)}
        <PoweredBy />
        <GridWindow />
        <StatusWindow />
        <AccordionWindow />
        <TaskBar />
        <StartMenu />
      </div>
      <StatusBar />
      <div className="h-[2px] shrink-0 bg-[#404040]" />
    </div>
  );
}
